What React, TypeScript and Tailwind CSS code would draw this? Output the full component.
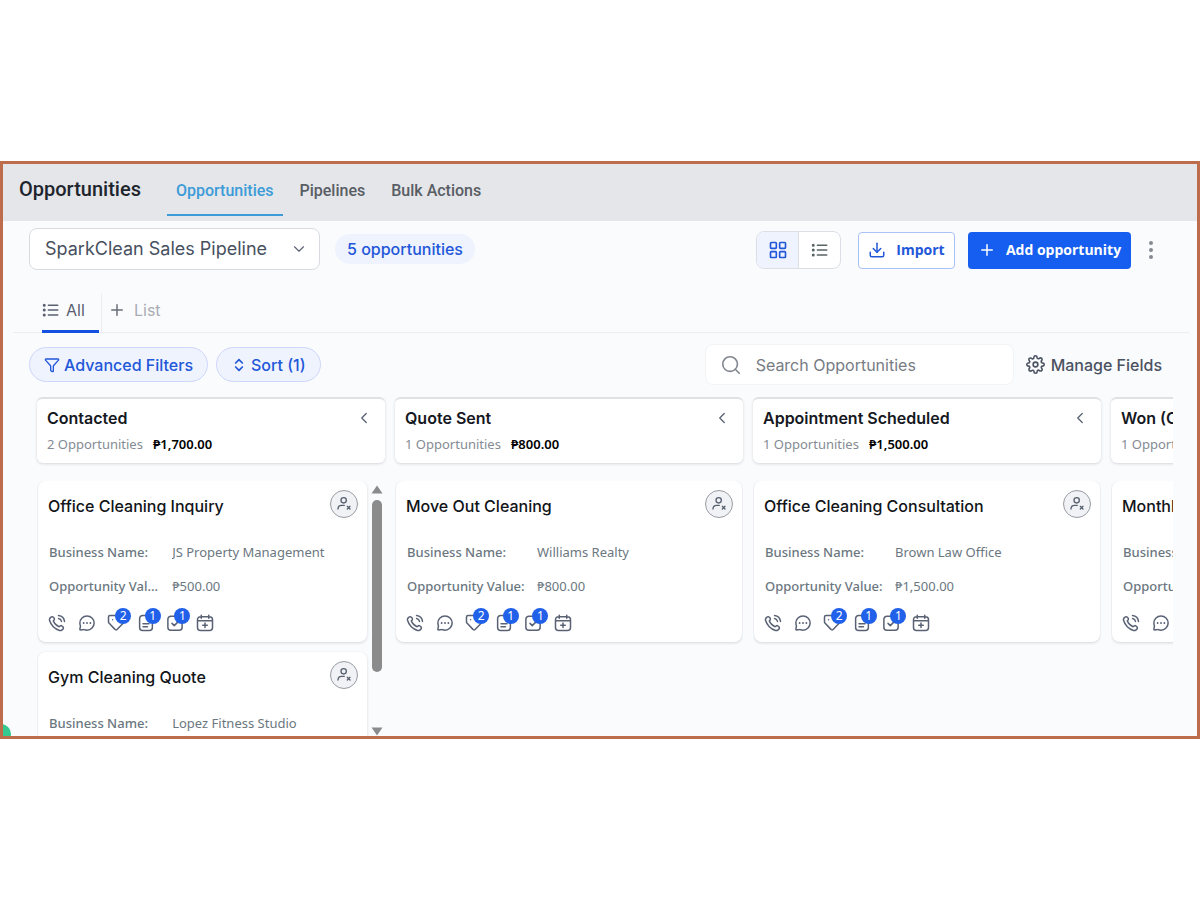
import { useState, type ReactNode } from "react";
import { ChevronDown, ChevronLeft, ChevronsUpDown, Download, Filter, LayoutGrid, Plus, Search } from "lucide-react";
import { FiSettings } from "react-icons/fi";

interface Opportunity {
  title: string;
  business: string;
  value: string;
}

interface Stage {
  name: string;
  count: number;
  total: string;
  scrolls?: boolean;
  items: Opportunity[];
}

const stages: Stage[] = [
  {
    name: "Contacted",
    count: 2,
    total: "₱1,700.00",
    scrolls: true,
    items: [
      { title: "Office Cleaning Inquiry", business: "JS Property Management", value: "₱500.00" },
      { title: "Gym Cleaning Quote", business: "Lopez Fitness Studio", value: "₱1,200.00" },
    ],
  },
  {
    name: "Quote Sent",
    count: 1,
    total: "₱800.00",
    items: [{ title: "Move Out Cleaning", business: "Williams Realty", value: "₱800.00" }],
  },
  {
    name: "Appointment Scheduled",
    count: 1,
    total: "₱1,500.00",
    items: [{ title: "Office Cleaning Consultation", business: "Brown Law Office", value: "₱1,500.00" }],
  },
  {
    name: "Won (Closed)",
    count: 1,
    total: "₱2,000.00",
    items: [{ title: "Monthly Cleaning", business: "Garcia Clinic", value: "₱2,000.00" }],
  },
];

function Icon({ children, className = "size-[18px]" }: { children: ReactNode; className?: string }) {
  return (
    <svg
      viewBox="0 0 24 24"
      fill="none"
      stroke="currentColor"
      strokeWidth={2}
      strokeLinecap="round"
      strokeLinejoin="round"
      className={className}
      aria-hidden="true"
    >
      {children}
    </svg>
  );
}

function ListIcon() {
  return (
    <Icon>
      <path d="M8.5 5.500H21M8.5 12H21M8.5 18.500H21" />
      <path d="M3 5.500h.01M3 12h.01M3 18.500h.01" strokeWidth={4} />
    </Icon>
  );
}

const actions = [
  {
    label: "Call",
    icon: (
      <path d="M14.05 6a5 5 0 0 1 3.95 3.95M14.05 2A9 9 0 0 1 22 9.94M10.23 13.86a14.6 14.6 0 0 1-2.85-4.01c-.06-.12-.09-.19-.11-.26a1.04 1.04 0 0 1 .14-.87c.05-.06.11-.12.22-.23.35-.35.53-.53.64-.7a2 2 0 0 0 0-2.18c-.11-.18-.29-.35-.64-.7l-.19-.2c-.53-.53-.8-.8-1.08-.94a2 2 0 0 0-1.81 0c-.28.14-.55.41-1.08.94l-.16.16c-.53.53-.79.79-1 1.15-.22.4-.38 1.02-.38 1.48 0 .41.08.7.24 1.26a19 19 0 0 0 4.87 8.29 19 19 0 0 0 8.29 4.87c.56.16.85.24 1.26.24.46 0 1.08-.16 1.48-.38.36-.2.62-.47 1.15-1l.16-.16c.53-.53.8-.8.94-1.08a2 2 0 0 0 0-1.81c-.14-.28-.41-.55-.94-1.08l-.2-.19c-.35-.35-.52-.53-.7-.64a2 2 0 0 0-2.18 0c-.17.11-.35.29-.7.64-.11.11-.17.17-.23.22-.24.17-.59.22-.87.14-.07-.02-.14-.05-.26-.11a14.6 14.6 0 0 1-4.01-2.85Z" />
    ),
  },
  {
    label: "Message",
    icon: (
      <>
        <path d="M12 21.5A9.5 9.5 0 1 0 2.5 12c0 1.2.2 2.3.6 3.3.2.5.2.8.1 1.2l-.7 3.6c-.1.8.3 1.3 1.1 1.2l4-.5c.5-.1.8 0 1.2.1 1 .4 2.1.6 3.2.6Z" />
        <path d="M7.5 12h.01M12 12h.01M16.5 12h.01" strokeWidth={2.5} />
      </>
    ),
  },
  {
    label: "Tags",
    badge: 2,
    icon: (
      <path d="M7.5 7.5h.01M2 4v6.5c0 .6.2 1.1.6 1.5l8 8.5c.8.9 2 .9 2.8.1l7.5-7.5c.8-.8.8-2 0-2.8l-8-7.7C12.5 2.2 12 2 11.4 2H4a2 2 0 0 0-2 2Z" />
    ),
  },
  {
    label: "Notes",
    badge: 1,
    icon: <path d="M14 2H7.5a4 4 0 0 0-4 4v12a4 4 0 0 0 4 4h9a4 4 0 0 0 4-4V8M8 13h8M8 17h6" />,
  },
  {
    label: "Tasks",
    badge: 1,
    icon: <path d="M14 3H6.5a4 4 0 0 0-4 4v10.5a4 4 0 0 0 4 4h11a4 4 0 0 0 4-4V10M8 12.5l3 3 5-5" />,
  },
  {
    label: "Appointments",
    icon: (
      <path d="M2 9h20M7 1.5v4M17 1.5v4M12 12v6M9 15h6M6 3.5h12a4 4 0 0 1 4 4V18a4 4 0 0 1-4 4H6a4 4 0 0 1-4-4V7.5a4 4 0 0 1 4-4Z" />
    ),
  },
];

function Field({ label, value }: { label: string; value: string }) {
  return (
    <div className="flex px-px text-[13px] leading-[18px] text-[#6b7780]">
      <dt className="w-2/5 truncate pr-2 font-medium">{label}</dt>
      <dd className="min-w-0 flex-1 truncate">{value}</dd>
    </div>
  );
}

function OpportunityCard({ item }: { item: Opportunity }) {
  return (
    <article className="h-[161px] shrink-0 rounded-lg bg-white pt-[9px] pr-[9px] pl-2.5 shadow-[0_1px_3px_rgba(16,24,40,0.16)]">
      <div className="flex items-start justify-between">
        <h3 className="pt-1 font-['Inter',sans-serif] text-base leading-6 font-medium text-[#111418]">{item.title}</h3>
        <button
          aria-label="Assign owner"
          className="flex size-7 shrink-0 items-center justify-center rounded-full border border-[#989ba3] bg-[#f0f2f5] text-[#586070]"
        >
          <Icon className="size-4">
            <circle cx="11.5" cy="6.5" r="4" />
            <path d="M3 19.5c0-3.500 2-5.500 5.500-5.500h4M17 15.5l4 4M21 15.5l-4 4" />
          </Icon>
        </button>
      </div>
      <dl className="mt-[25px] flex flex-col gap-4">
        <Field label="Business Name:" value={item.business} />
        <Field label="Opportunity Value:" value={item.value} />
      </dl>
      <div className="mt-[19px] flex w-[166px] justify-between text-[#596275]">
        {actions.map((a) => (
          <button key={a.label} aria-label={a.label} className="relative">
            <Icon>{a.icon}</Icon>
            {a.badge && (
              <span className="absolute -top-1.5 left-2 flex size-4 items-center justify-center rounded-full bg-[#2160e8] text-xs leading-4 text-white">
                {a.badge}
              </span>
            )}
          </button>
        ))}
      </div>
    </article>
  );
}

function ScrollRail() {
  return (
    <div className="ml-0.5 flex w-[15px] shrink-0 flex-col items-center pt-1 text-[#8b8b8b]" aria-hidden="true">
      <svg viewBox="0 0 12 9" className="w-3 fill-current">
        <path d="M6 0.5 11.5 8.5H0.5Z" />
      </svg>
      <div className="mt-1.5 h-[172px] w-2.5 rounded-full bg-current" />
      <svg viewBox="0 0 12 9" className="mt-auto w-3 fill-current">
        <path d="M6 8.5 11.5 0.5H0.5Z" />
      </svg>
    </div>
  );
}

function StageColumn({ stage }: { stage: Stage }) {
  return (
    <section className="flex w-[348px] shrink-0 flex-col">
      <header className="h-[66px] rounded-md border-t-2 border-[#dfe2e5] bg-white px-2.5 pt-[7px] shadow-[0_1px_3px_rgba(16,24,40,0.16)]">
        <div className="flex items-center justify-between">
          <h2 className="truncate text-base leading-6 font-semibold text-[#15181e]">{stage.name}</h2>
          <button aria-label={`Collapse ${stage.name}`} className="mr-0.5 text-[#596275]">
            <ChevronLeft size={18} strokeWidth={1.75} />
          </button>
        </div>
        <p className="mt-1 flex gap-2.5 font-['Noto_Sans',sans-serif] text-[13px] leading-5 whitespace-nowrap">
          <span className="text-[#858b94]">{stage.count} Opportunities</span>
          <span className="font-semibold text-black">{stage.total}</span>
        </p>
      </header>
      <div className="mt-[18px] flex h-[255px] overflow-hidden px-px font-['Noto_Sans',sans-serif]">
        <div className="flex min-w-0 flex-1 flex-col gap-2.5">
          {stage.items.map((item) => (
            <OpportunityCard key={item.title} item={item} />
          ))}
        </div>
        {stage.scrolls && <ScrollRail />}
      </div>
    </section>
  );
}

const tabs = ["Opportunities", "Pipelines", "Bulk Actions"];

export default function App() {
  const [tab, setTab] = useState("Opportunities");
  const [query, setQuery] = useState("");

  return (
    <div className="flex min-h-screen flex-col justify-center bg-white font-['Inter',sans-serif]">
      <main className="relative overflow-hidden border-[3px] border-[#bd6c4c] bg-[#fafbfd]">
        <header className="flex h-[57px] items-start bg-[#e5e6ea] pl-4 font-['Roboto',sans-serif] font-medium">
          <h1 className="text-xl leading-[50px] text-[#20252d]">Opportunities</h1>
          <nav className="ml-[26px] flex gap-2">
            {tabs.map((t) => (
              <button
                key={t}
                onClick={() => setTab(t)}
                className={
                  t === tab
                    ? "h-[52px] border-b-2 border-[#3d9cd8] px-[9px] pt-1 text-base text-[#3d9cd8]"
                    : "h-[52px] border-b-2 border-transparent px-[9px] pt-1 text-base text-[#585d64]"
                }
              >
                {t}
              </button>
            ))}
          </nav>
        </header>

        {/* pipeline picker and main actions */}
        <div className="flex items-center pt-[7px] pr-[43px] pl-[26px]">
          <div className="relative w-[291px]">
            <select
              aria-label="Pipeline"
              className="h-[42px] w-full appearance-none rounded-lg border border-[#d8dbe0] bg-white px-[15px] text-lg text-[#475060]"
            >
              <option>SparkClean Sales Pipeline</option>
            </select>
            <ChevronDown size={18} strokeWidth={1.5} className="pointer-events-none absolute top-3 right-3 text-[#596275]" />
          </div>
          <span className="ml-[15px] rounded-full bg-[#eff3fe] px-3 text-base leading-[30px] font-medium text-[#2257d9]">
            5 opportunities
          </span>
          <div className="ml-auto flex items-center pt-0.5">
            <div className="flex h-[38px] overflow-hidden rounded-lg border border-[#dce0e6] bg-white">
              <button
                aria-label="Board view"
                className="flex w-[42px] items-center justify-center border-r border-[#dce0e6] bg-[#eff3fe] text-[#2257d9]"
              >
                <LayoutGrid size={20} strokeWidth={2} />
              </button>
              <button aria-label="List view" className="flex w-[41px] items-center justify-center text-[#586365]">
                <ListIcon />
              </button>
            </div>
            <button className="ml-[17px] flex h-[37px] w-[97px] items-center justify-center gap-2.5 rounded border border-[#a9c2f7] bg-white font-['Open_Sans',sans-serif] text-sm font-bold text-[#2257d9]">
              <Download size={18} />
              Import
            </button>
            <button className="ml-[13px] flex h-[37px] w-[163px] items-center justify-center gap-2.5 rounded bg-[#155eef] font-['Open_Sans',sans-serif] text-sm font-bold whitespace-nowrap text-white">
              <Plus size={18} />
              Add opportunity
            </button>
            <button aria-label="More options" className="ml-[17px] text-[#858a92]">
              <svg viewBox="0 0 6 20" className="h-5 w-1.5 fill-current">
                <circle cx="3" cy="3" r="2" />
                <circle cx="3" cy="10" r="2" />
                <circle cx="3" cy="17" r="2" />
              </svg>
            </button>
          </div>
        </div>

        {/* saved views */}
        <div className="mt-[23px] mr-2 ml-2.5 flex h-10 border-b border-[#eceef1] text-base text-[#586070]">
          <button className="ml-[29px] flex h-10 w-[57px] items-center gap-1.5 border-b-[3px] border-[#1551e0] pb-1">
            <ListIcon />
            All
          </button>
          <div className="ml-0.5 w-px bg-[#eceef1]" />
          <button className="ml-1.5 flex items-center gap-2 pb-1.5 text-[#a9adb3]">
            <Plus size={18} className="text-[#686e78]" />
            List
          </button>
        </div>

        {/* filters */}
        <div className="mt-[11px] flex h-[41px] items-center pr-[35px] pl-[26px] text-base font-medium">
          <button className="flex h-[35px] items-center gap-1 rounded-full border border-[#cfd6fa] bg-[#eff3fe] px-3.5 whitespace-nowrap text-[#2257d9]">
            <Filter size={16} />
            Advanced Filters
          </button>
          <button className="ml-2 flex h-[35px] items-center gap-1 rounded-full border border-[#cfd6fa] bg-[#eff3fe] px-3.5 whitespace-nowrap text-[#2257d9]">
            <ChevronsUpDown size={16} strokeWidth={2.5} />
            Sort (1)
          </button>
          <label className="ml-auto flex h-[41px] w-[309px] items-center gap-3.5 rounded-lg border border-[#f3f4f6] bg-white px-3.5 text-[#81868e]">
            <Search size={22} strokeWidth={1.75} className="shrink-0" />
            <input
              aria-label="Search Opportunities"
              value={query}
              onChange={(e) => setQuery(e.target.value)}
              placeholder="Search Opportunities"
              className="w-full min-w-0 bg-transparent font-normal outline-none placeholder:text-[#777c84]"
            />
          </label>
          <button className="ml-3 flex items-center gap-1.5 whitespace-nowrap text-[#4a5262]">
            <FiSettings size={19} />
            Manage Fields
          </button>
        </div>

        {/* board */}
        <div className="mt-3 mr-6 ml-[27px] flex gap-2.5 overflow-hidden pl-[7px]">
          {stages.map((stage) => (
            <StageColumn key={stage.name} stage={stage} />
          ))}
        </div>

        <span className="absolute -bottom-2 -left-3 size-5 rounded-full bg-[#35c98f]" />
      </main>
    </div>
  );
}
